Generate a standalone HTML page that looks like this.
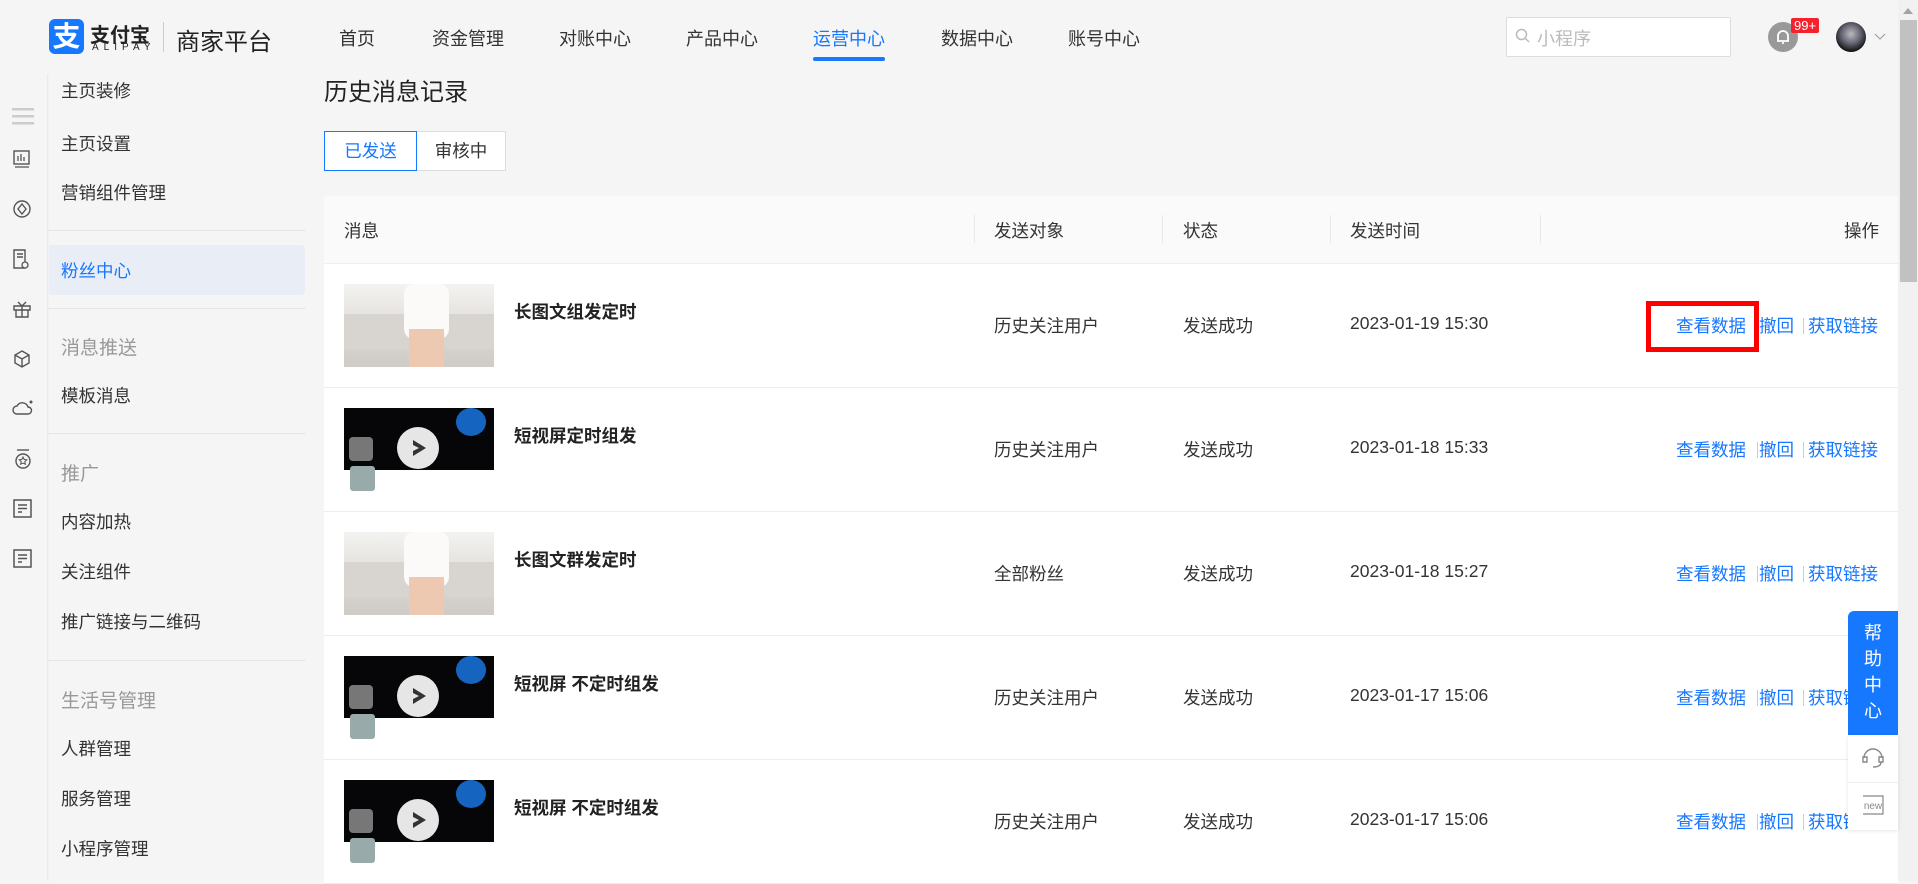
<!DOCTYPE html>
<html><head><meta charset="utf-8"><style>
*{margin:0;padding:0;box-sizing:border-box}
body{width:1918px;height:881px;overflow:hidden;background:#f5f5f5;font-family:"Liberation Sans","Noto Sans CJK SC",sans-serif;color:#333;position:relative}
.a{position:absolute;white-space:nowrap}
.nav{font-size:18px;color:#333;top:25px}
.side{font-size:17.5px;color:#333;left:61px}
.gh{font-size:19px;color:#999;left:61px}
.dv{position:absolute;left:47px;width:259px;height:1px;background:#e6e6e6}
.th{font-size:17.5px;color:#333}
.sep{position:absolute;top:215px;width:1px;height:28px;background:#e8e8e8}
.row{position:absolute;left:324px;width:1574px;height:124px;background:#fff;border-bottom:1px solid #eee}
.row .t{position:absolute;left:190px;top:35px;font-size:17.5px;font-weight:bold;color:#222}
.row .c{position:absolute;top:49px;font-size:17.5px;color:#333}
.row .l{position:absolute;top:49px;font-size:17.5px;color:#1677ff}
.row .bar{position:absolute;top:54px;width:1px;height:16px;background:#ccc}
.thumb{position:absolute;left:20px;top:20px;width:150px;height:83px;overflow:hidden}
.photo{background:linear-gradient(180deg,#f3f3f1 0%,#e9e7e4 30%,#d9d6d2 60%,#cfcbc6 100%)}
.video{background:#060608}
</style></head><body>
<div class="a" style="left:49px;top:19px;width:35px;height:35px;background:#1677ff;border-radius:6px;color:#fff;font-size:28px;line-height:35px;text-align:center;font-weight:bold">支</div>
<div class="a" style="left:90px;top:19px;font-size:20px;font-weight:bold;color:#222">支付宝</div>
<div class="a" style="left:92px;top:42px;font-size:10px;letter-spacing:5px;color:#222">ALIPAY</div>
<div class="a" style="left:163px;top:22px;width:1px;height:30px;background:#ccc"></div>
<div class="a" style="left:176px;top:22px;font-size:24px;color:#222">商家平台</div>
<div class="a nav" style="left:339px">首页</div>
<div class="a nav" style="left:432px">资金管理</div>
<div class="a nav" style="left:559px">对账中心</div>
<div class="a nav" style="left:686px">产品中心</div>
<div class="a nav" style="left:813px;color:#1677ff">运营中心</div>
<div class="a" style="left:813px;top:57px;width:72px;height:4px;border-radius:2px;background:#1677ff"></div>
<div class="a nav" style="left:941px">数据中心</div>
<div class="a nav" style="left:1068px">账号中心</div>
<div class="a" style="left:1506px;top:17px;width:225px;height:40px;background:#fff;border:1px solid #ddd;border-radius:2px"></div>
<svg class="a" style="left:1515px;top:28px" width="16" height="16"><circle cx="6.5" cy="6.5" r="5" fill="none" stroke="#bbb" stroke-width="1.5"/><line x1="10" y1="10" x2="14" y2="14" stroke="#bbb" stroke-width="1.5"/></svg>
<div class="a" style="left:1537px;top:25px;font-size:18px;color:#bbb">小程序</div>
<div class="a" style="left:1768px;top:22px;width:30px;height:30px;border-radius:50%;background:#999"></div>
<svg class="a" style="left:1774px;top:28px" width="18" height="18"><path d="M4 13V8a5 5 0 0110 0v5zM3 13h12M8 15h2" stroke="#fff" stroke-width="1.8" fill="none"/></svg>
<div class="a" style="left:1791px;top:18px;height:15px;padding:0 3px;background:#f5222d;color:#fff;font-size:13px;line-height:15px;border-radius:2px">99+</div>
<div class="a" style="left:1836px;top:22px;width:30px;height:30px;border-radius:50%;background:radial-gradient(circle at 50% 40%,#bbb 0,#667 40%,#111 75%)"></div>
<svg class="a" style="left:1874px;top:33px" width="12" height="8"><path d="M1 1l5 5 5-5" stroke="#999" fill="none"/></svg>
<div class="a" style="left:1898px;top:0;width:20px;height:881px;background:#f1f1f1"></div>
<div class="a" style="left:1900px;top:20px;width:17px;height:262px;background:#c1c1c1"></div>
<svg class="a" style="left:1903px;top:8px" width="10" height="6"><path d="M0 6L5 0l5 6z" fill="#a3a3a3"/></svg>
<svg class="a" style="left:12px;top:108px" width="22" height="18"><rect y="0" width="22" height="2.5" fill="#ccc"/><rect y="7" width="22" height="2.5" fill="#ccc"/><rect y="14" width="22" height="2.5" fill="#ccc"/></svg>
<svg class="a" style="left:13px;top:150px" width="18" height="18"><rect x="1" y="1" width="15" height="13" fill="none" stroke="#555" stroke-width="1.4"/><path d="M5 11V6M8 11V4M11 11V7M2 17h14" stroke="#555" stroke-width="1.3"/></svg>
<svg class="a" style="left:12px;top:199px" width="20" height="20"><circle cx="10" cy="10" r="8" fill="none" stroke="#555" stroke-width="1.4"/><path d="M10 5l4 5-4 5-4-5z" fill="none" stroke="#555" stroke-width="1.4"/></svg>
<svg class="a" style="left:12px;top:249px" width="20" height="22"><path d="M2 1h11v18H2zM5 5h6M5 8h6" fill="none" stroke="#555" stroke-width="1.4"/><circle cx="13" cy="16" r="3" fill="#f5f5f5" stroke="#555" stroke-width="1.3"/></svg>
<svg class="a" style="left:12px;top:299px" width="20" height="20"><path d="M2 7h16v4H2zM4 11v7h12v-7M10 7v11M6 3l4 4 4-4" fill="none" stroke="#555" stroke-width="1.4"/></svg>
<svg class="a" style="left:12px;top:349px" width="20" height="20"><path d="M10 2l7 4v8l-7 4-7-4V6zM3 6l7 4 7-4M10 10v8" fill="none" stroke="#555" stroke-width="1.4"/></svg>
<svg class="a" style="left:12px;top:398px" width="22" height="20"><path d="M5 16a4 4 0 010-8 6 6 0 0111 1 3.5 3.5 0 010 7z" fill="none" stroke="#555" stroke-width="1.4"/><circle cx="19" cy="4" r="1.5" fill="#555"/></svg>
<svg class="a" style="left:13px;top:448px" width="20" height="22"><path d="M4 2h12" stroke="#555" stroke-width="1.4"/><circle cx="10" cy="13" r="7" fill="none" stroke="#555" stroke-width="1.4"/><path d="M10 9l1.2 2.5 2.6.3-2 1.8.6 2.6L10 15l-2.4 1.2.6-2.6-2-1.8 2.6-.3z" fill="none" stroke="#555" stroke-width="1"/></svg>
<svg class="a" style="left:13px;top:499px" width="19" height="19"><rect x="1" y="1" width="17" height="17" fill="none" stroke="#555" stroke-width="1.5"/><path d="M5 6h9M5 9.5h9M5 13h4" stroke="#555" stroke-width="1.4"/></svg>
<svg class="a" style="left:13px;top:549px" width="19" height="19"><rect x="1" y="1" width="17" height="17" fill="none" stroke="#555" stroke-width="1.5"/><path d="M5 6h9M5 9.5h9M5 13h4" stroke="#555" stroke-width="1.4"/></svg>
<div class="a" style="left:47px;top:74px;width:2px;height:807px;background:linear-gradient(90deg,#e6e6e6,#f5f5f5)"></div>
<div class="a side" style="top:78px">主页装修</div>
<div class="a side" style="top:131px">主页设置</div>
<div class="a side" style="top:180px">营销组件管理</div>
<div class="dv" style="top:230px"></div>
<div class="a" style="left:49px;top:245px;width:256px;height:50px;background:#e9eef6;border-radius:3px"></div>
<div class="a side" style="top:258px;color:#1677ff">粉丝中心</div>
<div class="dv" style="top:308px"></div>
<div class="a gh" style="top:333px">消息推送</div>
<div class="a side" style="top:383px">模板消息</div>
<div class="dv" style="top:433px"></div>
<div class="a gh" style="top:459px">推广</div>
<div class="a side" style="top:509px">内容加热</div>
<div class="a side" style="top:559px">关注组件</div>
<div class="a side" style="top:609px">推广链接与二维码</div>
<div class="dv" style="top:660px"></div>
<div class="a gh" style="top:686px">生活号管理</div>
<div class="a side" style="top:736px">人群管理</div>
<div class="a side" style="top:786px">服务管理</div>
<div class="a side" style="top:836px">小程序管理</div>
<div class="a" style="left:324px;top:72px;font-size:24px;color:#222">历史消息记录</div>
<div class="a" style="left:324px;top:131px;width:93px;height:40px;border:1px solid #1677ff;background:#fff;color:#1677ff;font-size:17.5px;line-height:38px;text-align:center;z-index:2">已发送</div>
<div class="a" style="left:416px;top:131px;width:90px;height:40px;border:1px solid #ddd;background:#fff;color:#333;font-size:17.5px;line-height:38px;text-align:center">审核中</div>
<div class="a" style="left:324px;top:196px;width:1574px;height:68px;background:#fafafa;border-bottom:1px solid #eee"></div>
<div class="a th" style="left:344px;top:218px">消息</div>
<div class="sep" style="left:974px"></div>
<div class="a th" style="left:994px;top:218px">发送对象</div>
<div class="sep" style="left:1162px"></div>
<div class="a th" style="left:1183px;top:218px">状态</div>
<div class="sep" style="left:1330px"></div>
<div class="a th" style="left:1350px;top:218px">发送时间</div>
<div class="sep" style="left:1540px"></div>
<div class="a th" style="left:1844px;top:218px">操作</div>

<div class="row" style="top:264px">
 <div class="thumb photo"><div style="position:absolute;left:0;top:30px;width:150px;height:35px;background:#d8d5d0"></div><div style="position:absolute;left:60px;top:0;width:45px;height:55px;background:#fbfaf8;border-radius:10px"></div><div style="position:absolute;left:65px;top:45px;width:35px;height:38px;background:#ecc9b0"></div></div>
 <div class="t">长图文组发定时</div>
 <div class="c" style="left:670px">历史关注用户</div><div class="c" style="left:859px">发送成功</div><div class="c" style="left:1026px">2023-01-19 15:30</div>
 <div class="l" style="left:1352px">查看数据</div><div class="bar" style="left:1433px"></div><div class="l" style="left:1435px">撤回</div><div class="bar" style="left:1479px"></div><div class="l" style="left:1484px">获取链接</div>
 <div style="position:absolute;left:1322px;top:37px;width:113px;height:51px;border:5px solid #f00"></div>
</div>

<div class="row" style="top:388px">
 <div class="thumb video"><div style="position:absolute;left:53px;top:19px;width:42px;height:42px;border-radius:50%;background:#e6e6e6"></div><svg style="position:absolute;left:66px;top:30px" width="18" height="20"><path d="M3 2l13 8-13 8v-5l6-3-6-3z" fill="#333"/></svg><div style="position:absolute;left:5px;top:29px;width:24px;height:24px;border-radius:4px;background:#777"></div><div style="position:absolute;left:112px;top:0;width:30px;height:28px;border-radius:50%;background:#1565c0"></div><div style="position:absolute;left:0;top:62px;width:150px;height:21px;background:#fff"></div><div style="position:absolute;left:6px;top:58px;width:25px;height:25px;background:#9aa;border-radius:3px"></div></div>
 <div class="t">短视屏定时组发</div>
 <div class="c" style="left:670px">历史关注用户</div><div class="c" style="left:859px">发送成功</div><div class="c" style="left:1026px">2023-01-18 15:33</div>
 <div class="l" style="left:1352px">查看数据</div><div class="bar" style="left:1433px"></div><div class="l" style="left:1435px">撤回</div><div class="bar" style="left:1479px"></div><div class="l" style="left:1484px">获取链接</div>
</div>

<div class="row" style="top:512px">
 <div class="thumb photo"><div style="position:absolute;left:0;top:30px;width:150px;height:35px;background:#d8d5d0"></div><div style="position:absolute;left:60px;top:0;width:45px;height:55px;background:#fbfaf8;border-radius:10px"></div><div style="position:absolute;left:65px;top:45px;width:35px;height:38px;background:#ecc9b0"></div></div>
 <div class="t">长图文群发定时</div>
 <div class="c" style="left:670px">全部粉丝</div><div class="c" style="left:859px">发送成功</div><div class="c" style="left:1026px">2023-01-18 15:27</div>
 <div class="l" style="left:1352px">查看数据</div><div class="bar" style="left:1433px"></div><div class="l" style="left:1435px">撤回</div><div class="bar" style="left:1479px"></div><div class="l" style="left:1484px">获取链接</div>
</div>

<div class="row" style="top:636px">
 <div class="thumb video"><div style="position:absolute;left:53px;top:19px;width:42px;height:42px;border-radius:50%;background:#e6e6e6"></div><svg style="position:absolute;left:66px;top:30px" width="18" height="20"><path d="M3 2l13 8-13 8v-5l6-3-6-3z" fill="#333"/></svg><div style="position:absolute;left:5px;top:29px;width:24px;height:24px;border-radius:4px;background:#777"></div><div style="position:absolute;left:112px;top:0;width:30px;height:28px;border-radius:50%;background:#1565c0"></div><div style="position:absolute;left:0;top:62px;width:150px;height:21px;background:#fff"></div><div style="position:absolute;left:6px;top:58px;width:25px;height:25px;background:#9aa;border-radius:3px"></div></div>
 <div class="t">短视屏 不定时组发</div>
 <div class="c" style="left:670px">历史关注用户</div><div class="c" style="left:859px">发送成功</div><div class="c" style="left:1026px">2023-01-17 15:06</div>
 <div class="l" style="left:1352px">查看数据</div><div class="bar" style="left:1433px"></div><div class="l" style="left:1435px">撤回</div><div class="bar" style="left:1479px"></div><div class="l" style="left:1484px">获取链接</div>
</div>

<div class="row" style="top:760px">
 <div class="thumb video"><div style="position:absolute;left:53px;top:19px;width:42px;height:42px;border-radius:50%;background:#e6e6e6"></div><svg style="position:absolute;left:66px;top:30px" width="18" height="20"><path d="M3 2l13 8-13 8v-5l6-3-6-3z" fill="#333"/></svg><div style="position:absolute;left:5px;top:29px;width:24px;height:24px;border-radius:4px;background:#777"></div><div style="position:absolute;left:112px;top:0;width:30px;height:28px;border-radius:50%;background:#1565c0"></div><div style="position:absolute;left:0;top:62px;width:150px;height:21px;background:#fff"></div><div style="position:absolute;left:6px;top:58px;width:25px;height:25px;background:#9aa;border-radius:3px"></div></div>
 <div class="t">短视屏 不定时组发</div>
 <div class="c" style="left:670px">历史关注用户</div><div class="c" style="left:859px">发送成功</div><div class="c" style="left:1026px">2023-01-17 15:06</div>
 <div class="l" style="left:1352px">查看数据</div><div class="bar" style="left:1433px"></div><div class="l" style="left:1435px">撤回</div><div class="bar" style="left:1479px"></div><div class="l" style="left:1484px">获取链接</div>
</div>

<div class="a" style="left:1848px;top:611px;width:50px;height:124px;background:#1677ff;border-radius:6px 0 0 0;color:#fff;font-size:18px;line-height:26px;text-align:center;padding-top:9px;white-space:normal">帮<br>助<br>中<br>心</div>
<div class="a" style="left:1848px;top:735px;width:50px;height:95px;background:#fff;box-shadow:0 1px 4px rgba(0,0,0,.1)"></div>
<div class="a" style="left:1848px;top:782px;width:50px;height:1px;background:#eee"></div>
<svg class="a" style="left:1861px;top:747px" width="24" height="24"><path d="M3 11a9 9 0 0118 0M2 10h4v5H2zM18 10h4v5h-4zM20 15c0 4-4 5-8 5" fill="none" stroke="#888" stroke-width="1.4"/></svg>
<svg class="a" style="left:1861px;top:793px" width="24" height="24"><path d="M2 3h20v18H2" fill="none" stroke="#888" stroke-width="1.2"/><text x="12" y="16" font-size="10" fill="#888" text-anchor="middle" font-family="Liberation Sans">new</text></svg>
</body></html>
